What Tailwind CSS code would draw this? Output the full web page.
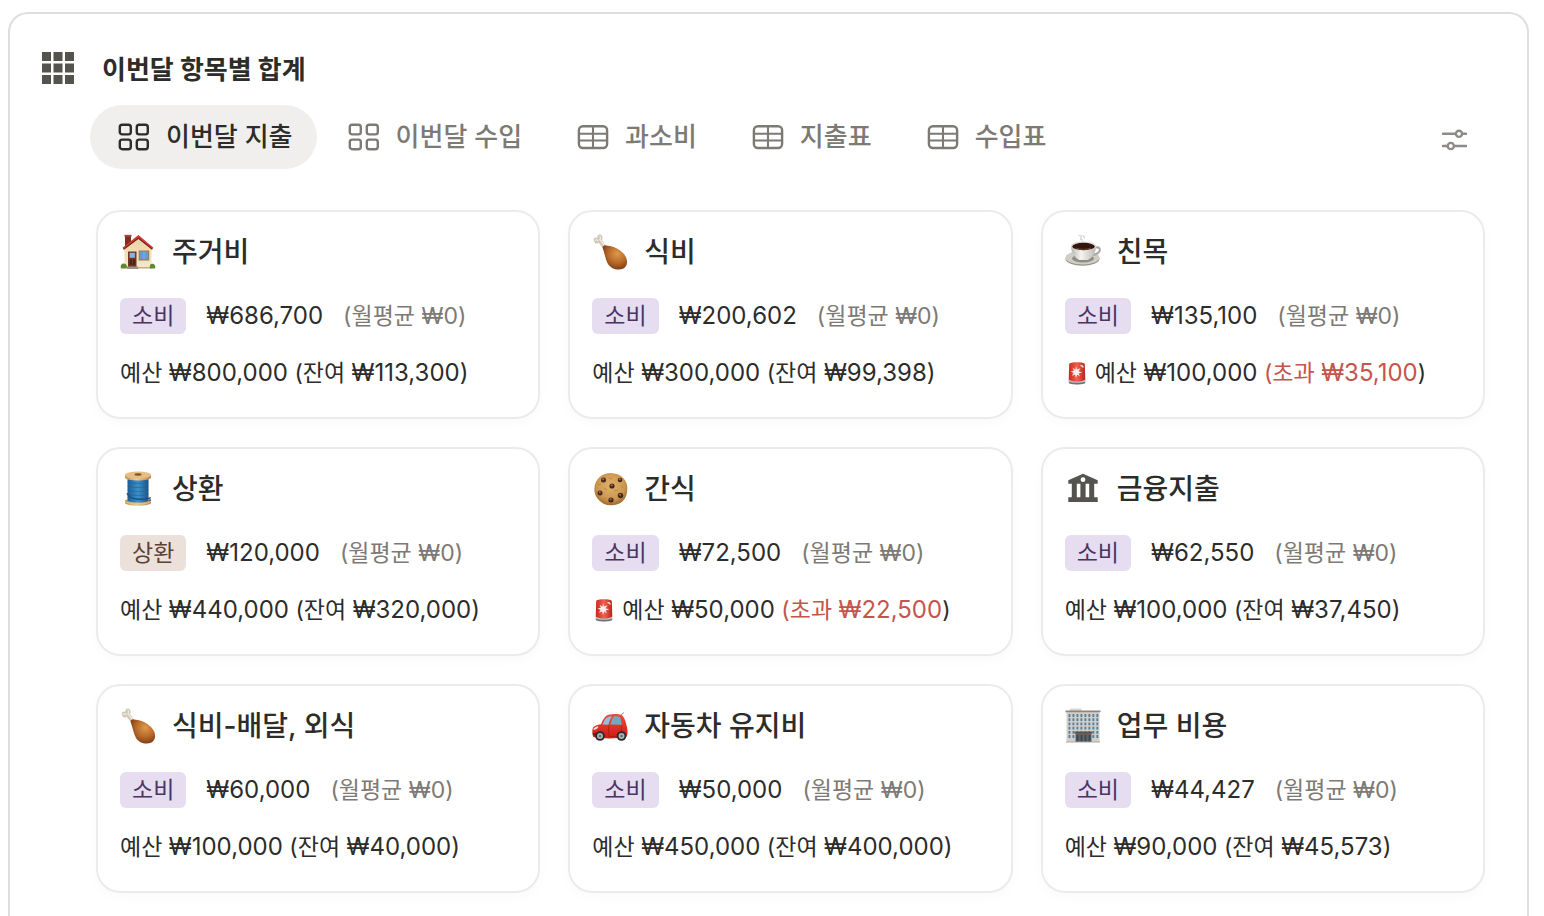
<!DOCTYPE html>
<html lang="ko">
<head>
    <meta charset="UTF-8">
    <meta name="viewport" content="width=device-width, initial-scale=1.0">
    <title>이번달 항목별 합계</title>
    <script src="https://cdn.jsdelivr.net/npm/@tailwindcss/browser@4"></script>
</head>
<body class="bg-white text-[#2c2c2b] font-['Inter','Noto_Sans_CJK_KR',sans-serif]">
    <!-- Icon sprite -->
    <svg class="absolute w-0 h-0" aria-hidden="true">
        <defs>
            <linearGradient id="g-wall" x1="0" y1="0" x2="0" y2="1"><stop offset="0" stop-color="#e9d3a6"/><stop offset="1" stop-color="#f6e8c8"/></linearGradient>
            <radialGradient id="g-meat" cx=".6" cy=".35" r=".75"><stop offset="0" stop-color="#dd9a4c"/><stop offset=".5" stop-color="#b8692a"/><stop offset="1" stop-color="#6b3011"/></radialGradient>
            <linearGradient id="g-cup" x1="0" y1="0" x2="1" y2="0"><stop offset="0" stop-color="#b9b6b0"/><stop offset=".4" stop-color="#f5f4f1"/><stop offset="1" stop-color="#bcb9b3"/></linearGradient>
            <linearGradient id="g-wood" x1="0" y1="0" x2="1" y2="0"><stop offset="0" stop-color="#c18f55"/><stop offset=".45" stop-color="#efcd95"/><stop offset="1" stop-color="#b78148"/></linearGradient>
            <linearGradient id="g-thread" x1="0" y1="0" x2="1" y2="0"><stop offset="0" stop-color="#1d5e94"/><stop offset=".5" stop-color="#3c90cb"/><stop offset="1" stop-color="#1b5688"/></linearGradient>
            <radialGradient id="g-cookie" cx=".5" cy=".4" r=".6"><stop offset="0" stop-color="#e0b36c"/><stop offset=".7" stop-color="#cb9750"/><stop offset="1" stop-color="#9d6a30"/></radialGradient>
            <linearGradient id="g-car" x1="0" y1="0" x2="0" y2="1"><stop offset="0" stop-color="#f4493b"/><stop offset="1" stop-color="#c91d15"/></linearGradient>
            <linearGradient id="g-siren" x1="0" y1="0" x2="1" y2="0"><stop offset="0" stop-color="#c6281d"/><stop offset=".5" stop-color="#f4604f"/><stop offset="1" stop-color="#b9241b"/></linearGradient>
        </defs>

        <symbol id="board" viewBox="0 0 32 32">
            <g fill="none" stroke="currentColor" stroke-width="2.4">
                <rect x="1.8" y="3.8" width="11" height="9.6" rx="2.4"/>
                <rect x="18.8" y="3.8" width="11" height="9.6" rx="2.4"/>
                <rect x="1.8" y="18.6" width="11" height="9.6" rx="2.4"/>
                <rect x="18.8" y="18.6" width="11" height="9.6" rx="2.4"/>
            </g>
        </symbol>
        <symbol id="table" viewBox="0 0 32 32">
            <rect x="1.9" y="5.2" width="28.2" height="21.8" rx="4" fill="none" stroke="currentColor" stroke-width="2.4"/>
            <path d="M2 12.7h28M2 19.5h28M16 5.5V27" fill="none" stroke="currentColor" stroke-width="2.1"/>
        </symbol>

        <symbol id="house" viewBox="0 0 36 36">
            <path d="M5 1.5h6v9l-6 4z" fill="#7e2f24"/>
            <path d="M4.5.8h7v2h-7z" fill="#a3483b"/>
            <path d="M4.5 15 18.5 3 31.500 15v18.500h-27z" fill="url(#g-wall)"/>
            <path d="M2.500 13.800 18.400 1 33.500 13.800l-1.500 1.500L18.400 4.500 3.900 15.500z" fill="#c93a32"/>
            <path d="M3.200 14.900 18.400 3.400 32.700 14.900l-.8.800L18.400 5 4 15.800z" fill="#7e211d"/>
            <rect x="8" y="17.500" width="8.500" height="15.500" fill="#703722"/>
            <rect x="9.600" y="18.800" width="5.300" height="5" fill="#7fb5e2"/>
            <path d="M9.800 25.500H12V31H9.800zM13 25.500h2.200V31H13z" fill="#51230f"/>
            <rect x="18.700" y="16.500" width="10.500" height="10" fill="#a4754f"/>
            <rect x="19.700" y="17.500" width="8.500" height="7.800" fill="#5f9fd8"/>
            <path d="M24 17.500v7.800" stroke="#8dbce6" stroke-width=".7"/>
            <path d="M7 32.500h11.500v2.500H7z" fill="#9a9188"/>
            <path d="M18.500 33h13v1.500h-13z" fill="#c3ad80"/>
            <path d="M1 34.500c-1-3 1-5.500 3.200-4.800 2.200-.2 3.300 2.600 2.500 4.800zM30 34.500c-.8-3 .5-5 2.400-4.800 2.300 0 3.600 2.400 2.600 4.800z" fill="#5c8a32"/>
        </symbol>
        <symbol id="chicken" viewBox="0 0 36 36">
            <path d="M2 7C.7 4.500 3.500 2.600 5.300 4.200 5 1.500 6.800-.2 8.800.8c2 1 2 3.300 1.300 5.200l3.600 5.400-3 2.400-4-5C5 10.300 2.800 9.500 2 7z" fill="#d0c6b8"/>
            <path d="M3 6.500c1-1.300 2.600-.6 3.400.6M7.500 2c1.200.4 1.300 2 .4 3.500l4.500 6" fill="none" stroke="#f0ebe2" stroke-width="1.300"/>
            <path d="M10.500 13.500c.3-1.500 2-2.600 3.500-2 4.500.5 11.500 1.500 17.300 7.800 5 5.500 5 12.500.2 15.200-5.200 2.600-12.500.5-15.500-4.500-2.500-4.300-3-9.500-5.500-16.500z" fill="url(#g-meat)"/>
        </symbol>
        <symbol id="coffee" viewBox="0 0 36 36">
            <ellipse cx="17.500" cy="24.800" rx="17" ry="7" fill="#96938b"/>
            <ellipse cx="17.500" cy="23.600" rx="17" ry="7" fill="#d0cdc5"/>
            <ellipse cx="18" cy="24.500" rx="11" ry="4" fill="#8f8c85"/>
            <path d="M31 13.500c4.500-.8 4.800 3 2.200 5.300-1.600 1.600-4 2.100-6 2.500" fill="none" stroke="#aaa7a0" stroke-width="2"/>
            <path d="M6 12c0 7 3.500 11.500 8 14h9c4.500-2.500 8-7 8-14z" fill="url(#g-cup)"/>
            <ellipse cx="18.500" cy="12" rx="12.500" ry="4.600" fill="#dedbd4"/>
            <ellipse cx="18.500" cy="12.500" rx="11.300" ry="3.700" fill="#30180f"/>
            <path d="M11 14c4 1.800 11 1.800 15 0" stroke="#714330" fill="none"/>
            <path d="M13.500 2c2-1 3.500 0 2.500 1.500s0 2.500 2 2.500M17.500 1.200c1.800 0 1 2 2.500 3" fill="none" stroke="#cfcecc" stroke-width="1.100"/>
        </symbol>
        <symbol id="thread" viewBox="0 0 36 36">
            <path d="M5 29.500c0-2 26-2 26 0v2.300c0 4-26 4-26 0z" fill="url(#g-wood)"/>
            <path d="M5 30.300c3 3.600 23 3.600 26 0" fill="none" stroke="#e7c089"/>
            <path d="M7.500 7h21v22.500c-3 2.800-18 2.800-21 0z" fill="url(#g-thread)"/>
            <path d="M7.500 11c5 2 16 2 21 0M7.500 15c5 2 16 2 21 0M7.500 19c5 2 16 2 21 0M7.500 23c5 2 16 2 21 0M7.500 26.500c5 2 16 2 21 0" fill="none" stroke="#1c5c92" stroke-width=".5"/>
            <path d="M7 22c1 5 11 8.500 23.500 5M30 26v4" fill="none" stroke="#174f7f" stroke-width="1.200"/>
            <path d="M5 4.200v2.300c0 4 26 4 26 0V4.200z" fill="url(#g-wood)"/>
            <ellipse cx="18" cy="4" rx="13" ry="3.400" fill="#e6bd83"/>
            <ellipse cx="18" cy="3.500" rx="3.500" ry="1.200" fill="#7d5630"/>
        </symbol>
        <symbol id="cookie" viewBox="0 0 36 36">
            <path d="M19 2c5 .2 9 1.600 12 4.800 3.500 3.500 4.500 7.200 4.300 11.700-.2 5-1.500 9-5 12-3.300 2.700-7 4-11.500 3.800-5-.1-8.800-1.800-11.800-5C3.800 26 2.200 22.500 2.400 18c.1-4.800 1.700-8.600 5-11.700C10.600 3.300 14.500 2 19 2z" fill="url(#g-cookie)"/>
            <path d="m12 17 3 2M22 20l4-1M17 7l3 1M9 13l-3 1M15 27l-4 1M29 15l2 2" stroke="#b8843e" stroke-width=".9"/>
            <g fill="#49281a">
                <circle cx="11.500" cy="9" r="2.500"/><circle cx="28" cy="9" r="2.300"/><circle cx="20" cy="15" r="2.600"/>
                <circle cx="8" cy="22" r="2.500"/><circle cx="28.500" cy="24.500" r="2.700"/><circle cx="19" cy="29" r="2.600"/>
            </g>
            <g fill="#987468">
                <circle cx="11.200" cy="8.300" r="1"/><circle cx="27.700" cy="8.300" r="1"/><circle cx="19.700" cy="14.300" r="1"/>
                <circle cx="7.800" cy="21.300" r="1"/><circle cx="28.200" cy="23.700" r="1"/><circle cx="18.700" cy="28.300" r="1"/>
            </g>
        </symbol>
        <symbol id="bank" viewBox="0 0 36 36">
            <path fill="#55534e" fill-rule="evenodd" d="M18 2.700 32.700 9.200v3.600h-3.500v13.400h3.500v4.800H3.300v-4.800h3.500V12.800H3.300V9.200zM18 6.300a2.400 2.400 0 1 0 0 4.800 2.400 2.400 0 0 0 0-4.800zM11.800 12.800v13.400h3.600V12.800zM20.600 12.800v13.400h3.600V12.800z"/>
        </symbol>
        <symbol id="car" viewBox="0 0 36 36">
            <path d="M29 7.500 31.500 4.500" stroke="#555" stroke-width=".8"/>
            <path d="M.5 21.500c.3-3 3-4.500 8.500-5.300 2-4.800 4.500-8.900 7.500-9.500 4.500-1 10-1 13 .3 3 1.800 4.500 7.500 5.700 13 .6 4 .5 7-.8 9-10 1.800-23 2-33 0-1.200-2-1.300-5-.9-7.500z" fill="url(#g-car)"/>
            <path d="M10.500 16.500c1.500-4 3.500-7.200 6-7.800l3.500-.5c-1.500 2.500-2.800 5-3.500 8.500z" fill="#8cc3d8"/>
            <path d="M18.300 16.500c.6-3 2-6 3.600-8.300 2.500-.1 4.700.1 6 .8 1 2 1.600 4.500 1.800 7.700z" fill="#71aabf"/>
            <path d="M17 17.500c-.8 4-.5 8 .3 11h10.500c1.500-3 2-7 1.700-11" stroke="#a9150f" stroke-width=".7" fill="none"/>
            <path d="M1.500 20.500c1.500-1.800 3.500-2.300 5-2-.3 1.700-2.500 3.300-4.800 3.500z" fill="#eee2d8"/>
            <path d="M.8 25h5v2.500H1.300z" fill="#7f1713"/>
            <circle cx="8" cy="28" r="4.800" fill="#29292a"/><circle cx="8" cy="28" r="3" fill="#aeb1b4"/><circle cx="8" cy="28" r="1.200" fill="#636669"/>
            <circle cx="29.500" cy="28" r="4.800" fill="#29292a"/><circle cx="29.500" cy="28" r="3" fill="#aeb1b4"/><circle cx="29.500" cy="28" r="1.200" fill="#636669"/>
        </symbol>
        <symbol id="office" viewBox="0 0 36 36">
            <path d="M5 .5h11.500v2.500H5z" fill="#d9d6d1"/>
            <path d="M1.500 4h33v30h-33z" fill="#d3cfc8"/>
            <path d="M.5 2.500h35v1.800H.5z" fill="#8d8580"/>
            <path d="M3.500 7.500h30M3.500 11.700h30M3.500 15.900h30M3.500 20.100h30M3.500 24.300h30M3.500 28.500h30" stroke="#54809f" stroke-width="2.800" stroke-dasharray="1.900 2.080"/>
            <path d="M10.500 25h16v9h-16z" fill="#6a615c"/>
            <path d="M9.500 23.500h17.800v2H9.500z" fill="#5e5550"/>
            <path d="M12.500 27v7M16.500 27v7M20.500 27v7M24.500 27v7" stroke="#33485b" stroke-width="1.800"/>
            <path d="M1 33.500h34v1H1z" fill="#aaa7a1"/>
        </symbol>
        <symbol id="siren" viewBox="0 0 24 24">
            <path d="M3.800 20h16.400v1.700c0 2.300-16.400 2.300-16.400 0z" fill="#6f7175"/>
            <path d="M3.500 19c3 1.800 14 1.800 17 0v1.500c-3 1.800-14 1.800-17 0z" fill="#bfc1c4"/>
            <path d="M4.200 3c0-2.500 15.600-2.500 15.600 0l.5 15.800c-2.500 2-14 2-16.600 0z" fill="url(#g-siren)"/>
            <path d="m11 5 1 3.600 3.500-1.400-2 3 3.700 1.300-3.700.9 1.600 3.100-2.900-1.900-1.200 3.300-.9-3.300-3.300 1.200 1.900-2.900-3.100-1.300 3.300-.8-1.300-3 2.900 1.900z" fill="#fff" fill-opacity=".9"/>
            <path d="M15.500 4.500c1.500 0 2.500.8 2.800 2" fill="none" stroke="#fff" stroke-opacity=".8" stroke-width="1.300"/>
        </symbol>
    </svg>

    <main class="mt-3 ml-2 mr-[15px] border-2 border-b-0 border-[#dededd] rounded-t-[20px] pb-6">
        <!-- Header -->
        <header class="flex items-center gap-7 pt-9 pl-8">
            <svg class="w-8 h-10" viewBox="0 0 32 40" fill="#55534e" aria-hidden="true">
                <path d="M0 2h9v9H0zM11.500 2h9v9h-9zM23 2h9v9h-9zM0 13.500h9v9H0zM11.500 13.500h9v9h-9zM23 13.500h9v9h-9zM0 25h9v9H0zM11.500 25h9v9h-9zM23 25h9v9h-9z"/>
            </svg>
            <h1 class="text-[26px] leading-10 font-bold">이번달 항목별 합계</h1>
        </header>

        <!-- View tabs -->
        <div class="flex items-center justify-between mt-[15px] ml-20 mr-11">
            <nav class="flex gap-[3px] text-[26px] leading-8 font-medium text-[#7d7a75]">
                <button type="button" class="flex items-center gap-4 h-16 pl-7 pr-6 rounded-full bg-[#f0efed] text-[#2c2c2b]">
                    <svg class="w-8 h-8" aria-hidden="true"><use href="#board"/></svg>이번달 지출
                </button>
                <button type="button" class="flex items-center gap-4 h-16 pl-7 pr-6 rounded-full">
                    <svg class="w-8 h-8" aria-hidden="true"><use href="#board"/></svg>이번달 수입
                </button>
                <button type="button" class="flex items-center gap-4 h-16 pl-7 pr-6 rounded-full">
                    <svg class="w-8 h-8" aria-hidden="true"><use href="#table"/></svg>과소비
                </button>
                <button type="button" class="flex items-center gap-4 h-16 pl-7 pr-6 rounded-full">
                    <svg class="w-8 h-8" aria-hidden="true"><use href="#table"/></svg>지출표
                </button>
                <button type="button" class="flex items-center gap-4 h-16 pl-7 pr-6 rounded-full">
                    <svg class="w-8 h-8" aria-hidden="true"><use href="#table"/></svg>수입표
                </button>
            </nav>
            <button type="button" class="p-3" aria-label="보기 설정">
                <svg class="w-8 h-8" viewBox="0 0 32 32" fill="none" stroke="#8e8b86" stroke-width="2.400" stroke-linecap="round" aria-hidden="true">
                    <path d="M4 12.800h12.500M23.500 12.800h3.500M4 25h4M15.500 25h11.500"/>
                    <circle cx="20" cy="12.800" r="3.100"/>
                    <circle cx="11.800" cy="25" r="3.100"/>
                </svg>
            </button>
        </div>

        <!-- Category cards -->
        <section class="grid grid-cols-3 gap-7 mt-[41px] ml-[86px] mr-[42px] text-[23px] leading-9 whitespace-nowrap">
            <article class="border-2 border-[#ebebea] rounded-3xl pt-[22px] px-[22px] pb-[26px] shadow-[0_4px_12px_rgba(0,0,0,0.025)]">
                <h2 class="flex items-center gap-4 text-[28px] leading-9 font-medium"><svg class="w-9 h-9" aria-hidden="true"><use href="#house"/></svg>주거비</h2>
                <p class="flex items-center mt-7"><span class="px-3 rounded-md bg-[#e6ddf0] text-[#4b3462]">소비</span><span class="ml-5 text-[24px]">₩686,700</span><span class="ml-5 text-[#7d7a75]">(월평균 ₩0)</span></p>
                <p class="mt-[21px]">예산 <span class="text-[24px]">₩800,000</span> (잔여 <span class="text-[24px]">₩113,300)</span></p>
            </article>
            <article class="border-2 border-[#ebebea] rounded-3xl pt-[22px] px-[22px] pb-[26px] shadow-[0_4px_12px_rgba(0,0,0,0.025)]">
                <h2 class="flex items-center gap-4 text-[28px] leading-9 font-medium"><svg class="w-9 h-9" aria-hidden="true"><use href="#chicken"/></svg>식비</h2>
                <p class="flex items-center mt-7"><span class="px-3 rounded-md bg-[#e6ddf0] text-[#4b3462]">소비</span><span class="ml-5 text-[24px]">₩200,602</span><span class="ml-5 text-[#7d7a75]">(월평균 ₩0)</span></p>
                <p class="mt-[21px]">예산 <span class="text-[24px]">₩300,000</span> (잔여 <span class="text-[24px]">₩99,398)</span></p>
            </article>
            <article class="border-2 border-[#ebebea] rounded-3xl pt-[22px] px-[22px] pb-[26px] shadow-[0_4px_12px_rgba(0,0,0,0.025)]">
                <h2 class="flex items-center gap-4 text-[28px] leading-9 font-medium"><svg class="w-9 h-9" aria-hidden="true"><use href="#coffee"/></svg>친목</h2>
                <p class="flex items-center mt-7"><span class="px-3 rounded-md bg-[#e6ddf0] text-[#4b3462]">소비</span><span class="ml-5 text-[24px]">₩135,100</span><span class="ml-5 text-[#7d7a75]">(월평균 ₩0)</span></p>
                <p class="flex items-center mt-[21px]"><svg class="w-6 h-6 mr-1.5" aria-hidden="true"><use href="#siren"/></svg><span>예산 <span class="text-[24px]">₩100,000</span> <span class="text-[#c4554d]">(초과 <span class="text-[24px]">₩35,100</span></span>)</span></p>
            </article>

            <article class="border-2 border-[#ebebea] rounded-3xl pt-[22px] px-[22px] pb-[26px] shadow-[0_4px_12px_rgba(0,0,0,0.025)]">
                <h2 class="flex items-center gap-4 text-[28px] leading-9 font-medium"><svg class="w-9 h-9" aria-hidden="true"><use href="#thread"/></svg>상환</h2>
                <p class="flex items-center mt-7"><span class="px-3 rounded-md bg-[#ebe1da] text-[#594236]">상환</span><span class="ml-5 text-[24px]">₩120,000</span><span class="ml-5 text-[#7d7a75]">(월평균 ₩0)</span></p>
                <p class="mt-[21px]">예산 <span class="text-[24px]">₩440,000</span> (잔여 <span class="text-[24px]">₩320,000)</span></p>
            </article>
            <article class="border-2 border-[#ebebea] rounded-3xl pt-[22px] px-[22px] pb-[26px] shadow-[0_4px_12px_rgba(0,0,0,0.025)]">
                <h2 class="flex items-center gap-4 text-[28px] leading-9 font-medium"><svg class="w-9 h-9" aria-hidden="true"><use href="#cookie"/></svg>간식</h2>
                <p class="flex items-center mt-7"><span class="px-3 rounded-md bg-[#e6ddf0] text-[#4b3462]">소비</span><span class="ml-5 text-[24px]">₩72,500</span><span class="ml-5 text-[#7d7a75]">(월평균 ₩0)</span></p>
                <p class="flex items-center mt-[21px]"><svg class="w-6 h-6 mr-1.5" aria-hidden="true"><use href="#siren"/></svg><span>예산 <span class="text-[24px]">₩50,000</span> <span class="text-[#c4554d]">(초과 <span class="text-[24px]">₩22,500</span></span>)</span></p>
            </article>
            <article class="border-2 border-[#ebebea] rounded-3xl pt-[22px] px-[22px] pb-[26px] shadow-[0_4px_12px_rgba(0,0,0,0.025)]">
                <h2 class="flex items-center gap-4 text-[28px] leading-9 font-medium"><svg class="w-9 h-9" aria-hidden="true"><use href="#bank"/></svg>금융지출</h2>
                <p class="flex items-center mt-7"><span class="px-3 rounded-md bg-[#e6ddf0] text-[#4b3462]">소비</span><span class="ml-5 text-[24px]">₩62,550</span><span class="ml-5 text-[#7d7a75]">(월평균 ₩0)</span></p>
                <p class="mt-[21px]">예산 <span class="text-[24px]">₩100,000</span> (잔여 <span class="text-[24px]">₩37,450)</span></p>
            </article>

            <article class="border-2 border-[#ebebea] rounded-3xl pt-[22px] px-[22px] pb-[26px] shadow-[0_4px_12px_rgba(0,0,0,0.025)]">
                <h2 class="flex items-center gap-4 text-[28px] leading-9 font-medium"><svg class="w-9 h-9" aria-hidden="true"><use href="#chicken"/></svg>식비-배달, 외식</h2>
                <p class="flex items-center mt-7"><span class="px-3 rounded-md bg-[#e6ddf0] text-[#4b3462]">소비</span><span class="ml-5 text-[24px]">₩60,000</span><span class="ml-5 text-[#7d7a75]">(월평균 ₩0)</span></p>
                <p class="mt-[21px]">예산 <span class="text-[24px]">₩100,000</span> (잔여 <span class="text-[24px]">₩40,000)</span></p>
            </article>
            <article class="border-2 border-[#ebebea] rounded-3xl pt-[22px] px-[22px] pb-[26px] shadow-[0_4px_12px_rgba(0,0,0,0.025)]">
                <h2 class="flex items-center gap-4 text-[28px] leading-9 font-medium"><svg class="w-9 h-9" aria-hidden="true"><use href="#car"/></svg>자동차 유지비</h2>
                <p class="flex items-center mt-7"><span class="px-3 rounded-md bg-[#e6ddf0] text-[#4b3462]">소비</span><span class="ml-5 text-[24px]">₩50,000</span><span class="ml-5 text-[#7d7a75]">(월평균 ₩0)</span></p>
                <p class="mt-[21px]">예산 <span class="text-[24px]">₩450,000</span> (잔여 <span class="text-[24px]">₩400,000)</span></p>
            </article>
            <article class="border-2 border-[#ebebea] rounded-3xl pt-[22px] px-[22px] pb-[26px] shadow-[0_4px_12px_rgba(0,0,0,0.025)]">
                <h2 class="flex items-center gap-4 text-[28px] leading-9 font-medium"><svg class="w-9 h-9" aria-hidden="true"><use href="#office"/></svg>업무 비용</h2>
                <p class="flex items-center mt-7"><span class="px-3 rounded-md bg-[#e6ddf0] text-[#4b3462]">소비</span><span class="ml-5 text-[24px]">₩44,427</span><span class="ml-5 text-[#7d7a75]">(월평균 ₩0)</span></p>
                <p class="mt-[21px]">예산 <span class="text-[24px]">₩90,000</span> (잔여 <span class="text-[24px]">₩45,573)</span></p>
            </article>
        </section>
    </main>
</body>
</html>
